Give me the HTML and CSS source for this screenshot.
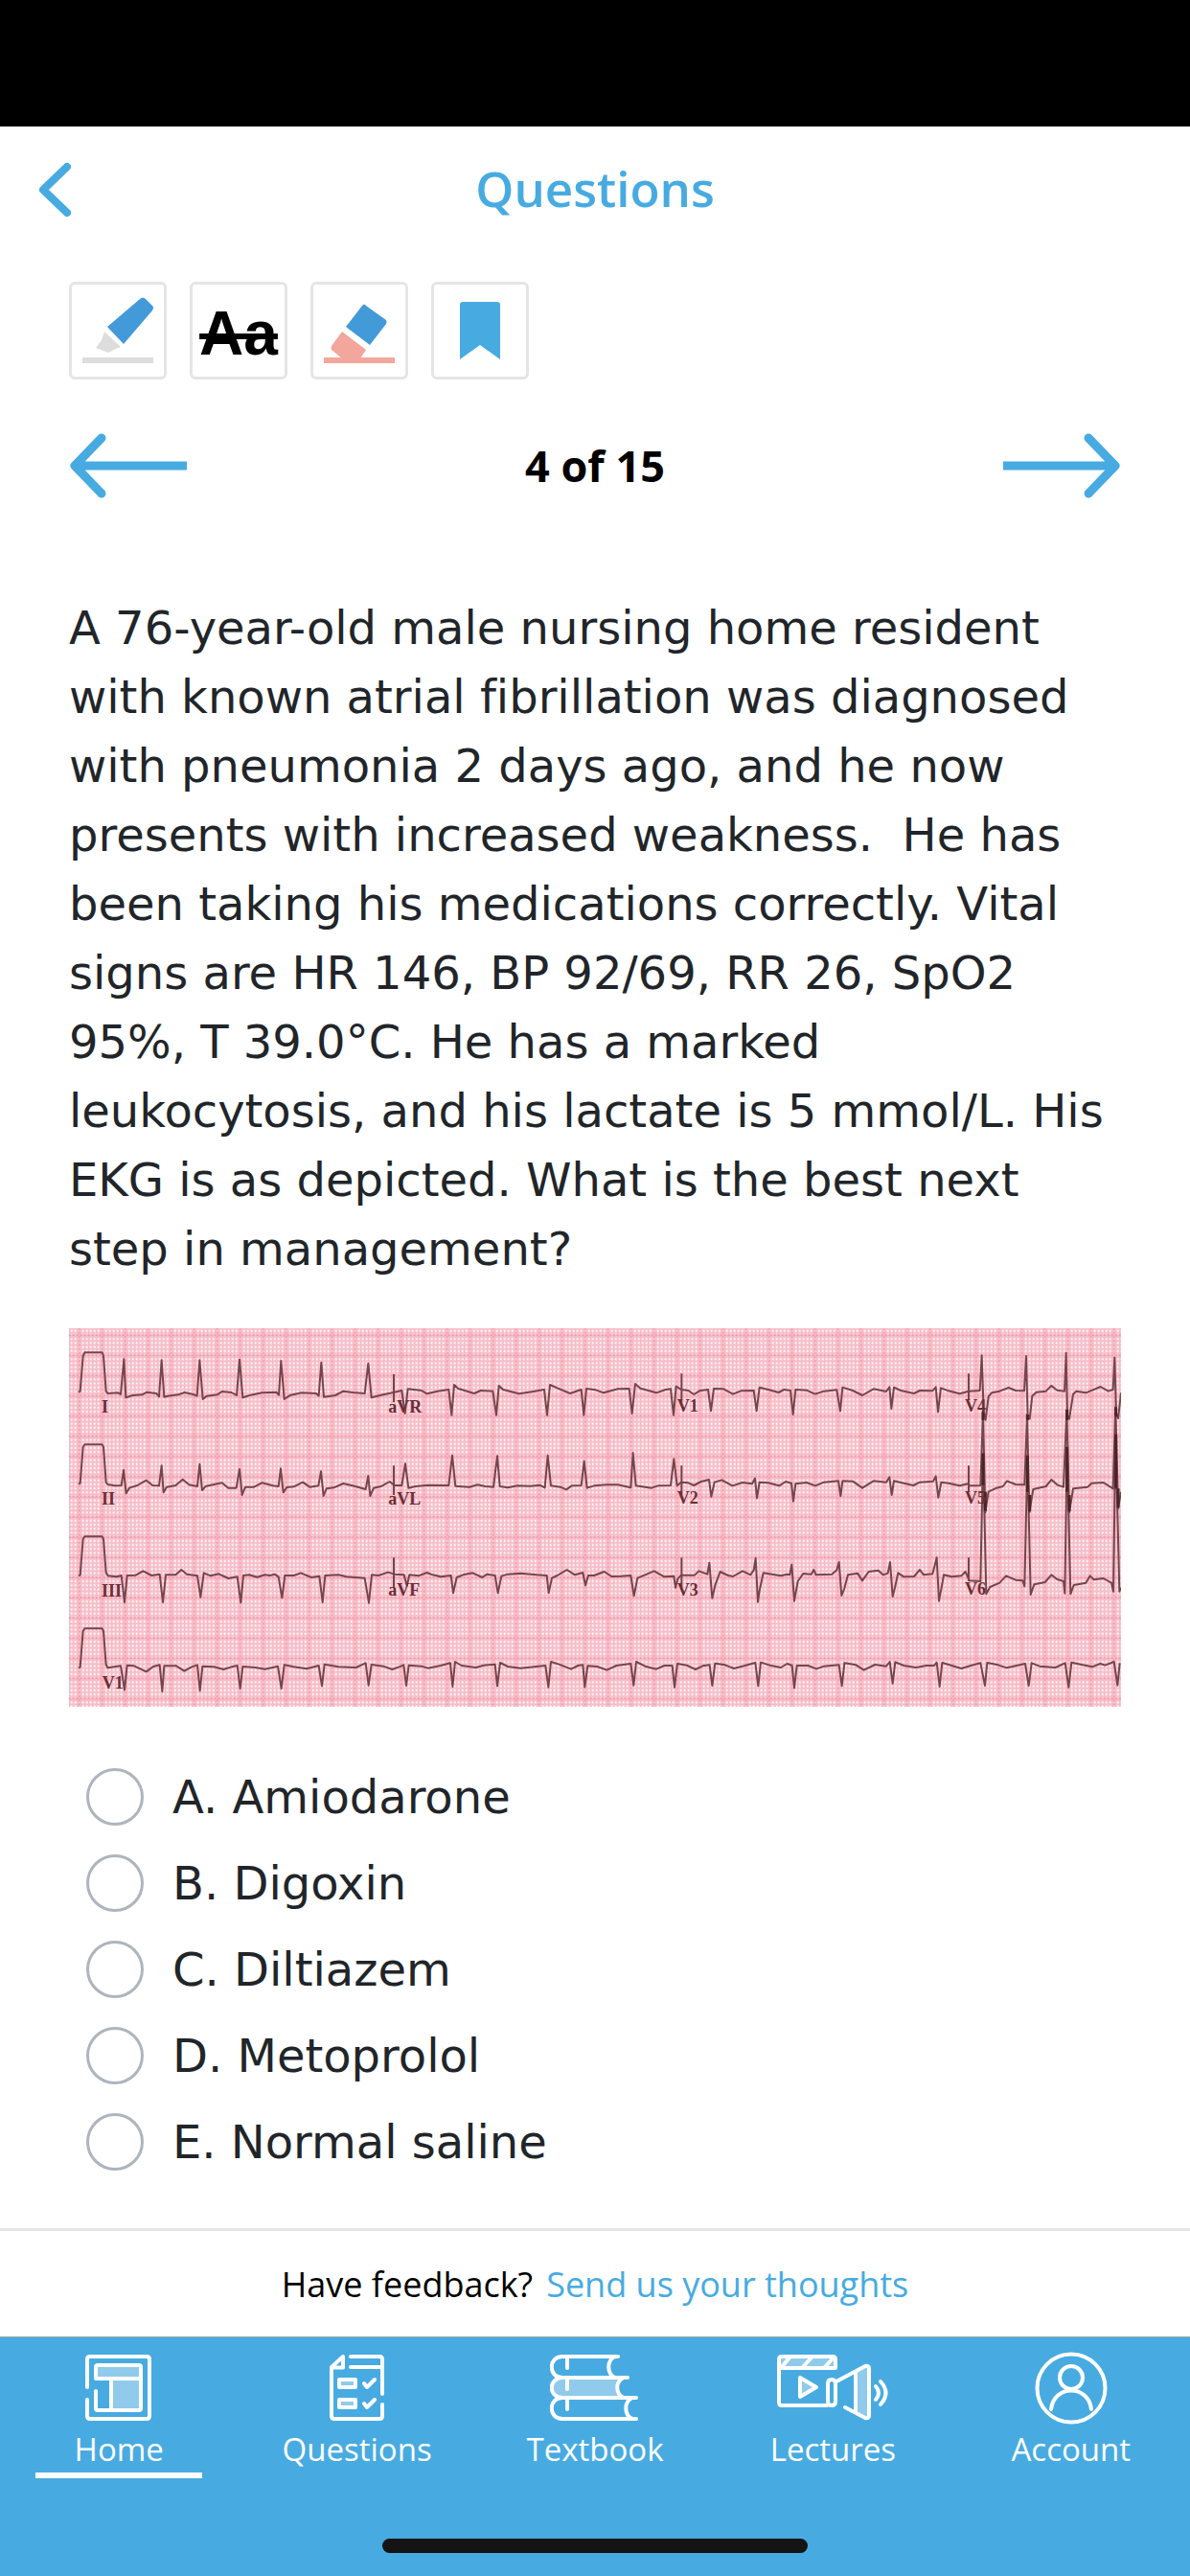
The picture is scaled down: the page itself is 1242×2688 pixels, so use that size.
FILE: index.html
```html
<!DOCTYPE html>
<html lang="en">
  <head>
    <meta charset="UTF-8" />
    <meta name="viewport" content="width=device-width, initial-scale=1.0" />
    <title>Questions</title>
    <link rel="stylesheet" href="styles.css">
  </head>
  <body>
    <div class="status-bar"></div>
    <header class="header">
      <button class="icon-button back" aria-label="Back">
        <svg width="34" height="58" viewBox="0 0 34 58"><path d="M30 5 L5 29 L30 53" /></svg>
      </button>
      <h1>Questions</h1>
    </header>

    <main>
      <div class="tools">
        <button class="tool" aria-label="Highlight">
          <svg width="102" height="102" viewBox="0 0 102 102">
            <path fill="#429ad9" d="M40 47 L74 18 Q77 15 80 18 L87 25 Q89 27 87 30 L57 65 Z" />
            <path fill="#ddd" d="M37 52 L54 68 L49 70 L41 74 L28 69 L34 61 Z" />
            <path fill="#ddd" d="M14 79 H88 V85 H14 Z" />
          </svg>
        </button>
        <button class="tool strike" aria-label="Strikethrough"><s>Aa</s></button>
        <button class="tool" aria-label="Erase">
          <svg width="102" height="102" viewBox="0 0 102 102">
            <path fill="#429ad9" d="M54 25 Q56 22 58 25 L79 40 Q80 42 79 44 L62 66 L37 47 Z" />
            <path fill="#f3a69c" d="M33 52 L58 71 L52 80 H33 L22 71 Q21 69 22 67 Z" />
            <path fill="#f3a69c" d="M14 79 H88 V85 H14 Z" />
          </svg>
        </button>
        <button class="tool" aria-label="Bookmark">
          <svg width="102" height="102" viewBox="0 0 102 102">
            <path fill="#47abe1" d="M30 81 V24 Q30 21 33 21 H69 Q72 21 72 24 V81 L51 66 Z" />
          </svg>
        </button>
      </div>

      <div class="pager">
        <button class="icon-button" aria-label="Previous question">
          <svg width="123" height="68" viewBox="0 0 123 68"><path d="M34 5 L6 34 L34 63 M6 34 H123" /></svg>
        </button>
        <h2>4 of 15</h2>
        <button class="icon-button" aria-label="Next question">
          <svg width="123" height="68" viewBox="0 0 123 68"><path d="M89 5 L117 34 L89 63 M117 34 H0" /></svg>
        </button>
      </div>

      <p class="question">A 76-year-old male nursing home resident<br>
        with known atrial fibrillation was diagnosed<br>
        with pneumonia 2 days ago, and he now<br>
        presents with increased weakness.&nbsp; He has<br>
        been taking his medications correctly. Vital<br>
        signs are HR 146, BP 92/69, RR 26, SpO2<br>
        95%, T 39.0°C. He has a marked<br>
        leukocytosis, and his lactate is 5 mmol/L. His<br>
        EKG is as depicted. What is the best next<br>
        step in management?</p>

      <svg class="ekg" viewBox="36 48 3294 1185" role="img" aria-label="EKG">
        <defs>
          <pattern id="minor" x="44" y="44" width="12" height="12.64" patternUnits="userSpaceOnUse">
            <path d="M6 0 V13 M0 6 H12" stroke="#ee8197" stroke-opacity=".5" stroke-width="6" />
          </pattern>
          <pattern id="major" x="32" y="38" width="72" height="63.2" patternUnits="userSpaceOnUse">
            <path d="M36 0 V64 M0 32 H72" stroke="#ea5f7a" stroke-opacity=".4" stroke-width="5" />
          </pattern>
        </defs>
        <rect x="36" y="48" width="3294" height="1185" fill="#fff6f7" />
        <rect x="36" y="48" width="3294" height="1185" fill="url(#minor)" />
        <rect x="36" y="48" width="3294" height="1185" fill="url(#major)" />
        <g class="trace">
          <polyline points="66,248 71,245 80,135 85,124 140,124 144,135 152,245 157,252 190,250 198,255 208,145 214,265 235,258 265,256 280,248 310,252 318,262 326,148 334,263 345,260 378,256 398,249 425,255 437,260 445,148 455,270 468,260 500,256 515,246 545,249 561,258 570,146 580,265 605,257 640,250 685,248 693,257 700,150 710,270 730,257 765,250 810,252 818,260 826,155 834,263 870,258 895,245 925,249 962,252 973,158 983,265 1020,256 1055,248 1078,243 1088,315 1097,238 1140,243 1157,253 1190,245 1225,240 1234,320 1242,225 1255,237 1305,252 1325,243 1363,245 1374,320 1382,228 1395,240 1445,253 1490,246 1524,240 1533,320 1542,225 1565,235 1605,252 1640,240 1648,320 1656,237 1685,241 1710,250 1755,238 1790,237 1799,315 1809,222 1825,236 1875,250 1905,240 1920,238 1929,320 1937,230 1953,240 1975,243 1993,255 2010,244 2037,240 2046,307 2055,237 2085,238 2115,254 2140,244 2180,243 2189,307 2198,233 2225,240 2258,249 2275,240 2295,243 2303,318 2311,240 2345,242 2372,254 2400,245 2440,241 2451,307 2458,233 2490,243 2520,258 2555,238 2595,246 2605,232 2611,300 2619,233 2640,243 2682,252 2700,243 2740,244 2750,232 2757,310 2766,235 2790,244 2825,253 2850,246 2888,243 2894,133 2900,310 2906,335 2915,262 2925,250 2950,245 2978,234 3000,243 3027,244 3033,135 3038,330 3044,332 3052,260 3065,248 3095,245 3112,228 3130,242 3153,245 3158,125 3162,320 3168,332 3180,255 3190,245 3220,250 3240,242 3266,231 3290,245 3305,240 3310,140 3315,315 3321,330 3330,250" />
          <polyline points="66,536 71,533 80,420 85,412 140,412 144,420 152,530 157,537 180,541 200,540 207,492 215,565 225,548 250,540 278,524 298,540 318,541 326,478 332,562 342,545 370,540 392,521 412,538 438,543 445,473 453,555 465,542 515,532 535,548 560,548 570,489 578,570 588,545 615,545 640,532 675,541 692,543 699,487 707,562 718,546 740,544 768,530 790,545 817,541 825,496 833,573 842,550 865,547 895,534 930,542 965,552 973,510 979,573 990,548 1015,542 1040,528 1055,540 1078,540 1089,472 1099,548 1120,543 1160,539 1225,540 1236,446 1246,542 1290,545 1315,538 1340,543 1365,545 1377,448 1385,543 1410,547 1440,541 1480,542 1510,539 1526,547 1535,446 1545,541 1575,545 1593,553 1610,541 1640,540 1649,464 1658,548 1680,541 1720,538 1755,538 1795,547 1802,438 1811,541 1860,548 1880,541 1920,540 1930,457 1940,541 1953,530 1975,532 1993,540 2015,528 2040,522 2047,575 2057,530 2080,523 2113,541 2145,531 2175,535 2184,518 2190,580 2198,530 2225,532 2260,541 2280,528 2298,533 2304,590 2311,535 2345,531 2373,541 2400,530 2445,526 2452,573 2458,526 2490,527 2520,548 2555,526 2595,530 2605,514 2612,570 2619,526 2650,533 2680,540 2700,530 2742,527 2750,511 2758,578 2767,530 2790,533 2825,541 2850,535 2855,541 2890,540 2898,310 2905,625 2915,560 2940,548 2960,543 2973,526 3000,537 3028,538 3036,318 3043,625 3055,552 3095,543 3112,522 3130,538 3150,545 3160,303 3168,625 3180,550 3225,545 3238,533 3275,531 3305,550 3313,295 3321,612 3330,560" />
          <polyline points="66,823 71,821 80,708 85,700 140,700 144,708 152,813 158,823 185,826 200,822 210,906 218,822 245,821 268,808 295,822 320,818 330,906 339,820 370,820 388,804 405,818 438,823 448,890 458,814 480,823 505,817 535,831 563,826 574,907 582,822 600,820 625,827 650,820 665,822 680,818 692,826 703,892 712,822 740,822 762,814 795,828 820,824 830,906 838,822 880,820 905,826 962,830 975,908 984,820 1005,822 1035,812 1055,818 1085,820 1094,855 1102,820 1130,823 1157,813 1175,820 1200,826 1232,822 1239,877 1250,828 1270,820 1300,814 1330,828 1345,818 1370,822 1379,877 1390,824 1410,818 1450,815 1500,820 1532,822 1538,877 1548,830 1565,822 1595,804 1620,820 1645,813 1653,853 1662,822 1680,822 1712,810 1735,825 1765,824 1795,822 1805,886 1816,830 1840,820 1868,808 1900,826 1930,824 1935,860 1942,832 1953,821 1995,821 2008,808 2035,818 2041,782 2050,893 2060,850 2075,810 2100,822 2115,825 2145,808 2170,820 2180,805 2186,768 2193,905 2198,870 2210,814 2265,823 2285,818 2293,820 2299,788 2307,902 2318,840 2335,816 2360,818 2368,804 2375,820 2425,818 2440,805 2447,780 2455,885 2464,862 2475,820 2505,815 2520,838 2540,810 2570,806 2585,820 2600,815 2607,780 2615,888 2622,860 2632,814 2650,826 2682,825 2700,804 2712,820 2740,817 2753,766 2760,902 2768,860 2775,820 2800,826 2830,823 2843,810 2855,838 2890,840 2898,440 2908,880 2920,858 2950,845 2970,823 3000,836 3022,838 3028,856 3037,445 3047,882 3058,850 3092,843 3112,820 3130,834 3150,840 3154,878 3161,420 3172,880 3182,852 3220,845 3233,823 3245,835 3275,831 3300,845 3306,872 3313,380 3325,872 3330,860" />
          <polyline points="66,1111 71,1109 80,996 85,988 140,988 144,996 152,1101 157,1111 198,1105 210,1180 218,1103 240,1105 278,1123 300,1107 320,1102 328,1185 334,1105 372,1105 397,1121 420,1108 438,1102 446,1183 454,1106 490,1108 520,1116 545,1108 563,1104 572,1176 580,1107 620,1110 650,1115 690,1106 701,1176 710,1102 740,1108 780,1114 818,1104 828,1168 836,1100 880,1108 935,1110 965,1096 974,1166 983,1101 1020,1106 1048,1116 1070,1108 1084,1102 1092,1167 1100,1103 1140,1106 1160,1112 1200,1104 1230,1096 1237,1170 1245,1092 1265,1104 1310,1110 1335,1103 1370,1100 1377,1168 1386,1095 1410,1107 1450,1112 1528,1104 1537,1172 1545,1092 1570,1100 1608,1115 1630,1104 1645,1102 1651,1171 1660,1105 1690,1107 1720,1118 1750,1104 1795,1098 1804,1166 1812,1092 1840,1106 1875,1115 1900,1104 1925,1104 1932,1172 1941,1098 1970,1103 1998,1116 2020,1105 2042,1102 2050,1167 2059,1097 2090,1102 2118,1113 2150,1105 2185,1095 2194,1168 2202,1094 2230,1103 2265,1110 2285,1098 2300,1104 2307,1174 2315,1104 2350,1104 2376,1114 2400,1106 2447,1102 2456,1168 2464,1096 2500,1102 2525,1118 2560,1101 2595,1106 2606,1092 2615,1160 2623,1093 2650,1104 2688,1110 2720,1104 2745,1104 2753,1094 2762,1170 2770,1095 2800,1104 2830,1113 2860,1104 2890,1096 2904,1167 2911,1095 2945,1102 2972,1111 3000,1105 3030,1098 3041,1167 3050,1096 3075,1106 3125,1110 3155,1096 3166,1172 3175,1094 3210,1102 3240,1108 3265,1098 3280,1103 3308,1092 3319,1166 3326,1096" />
          <path d="M1053 192 V280 M1053 478 V570 M1053 766 V860 M1954 190 V280 M1954 478 V570 M1954 766 V860 M2853 190 V270 M2853 478 V560 M2853 766 V840" />
          <!-- V4-V6 overlap -->
          <path class="dense" d="M2898 310 V335 M2898 440 V540 M2905 560 V620 M3037 318 V335 M3037 446 V560 M3044 570 V622 M3161 303 V335 M3161 420 V560 M3168 570 V622 M3314 295 V325 M3314 380 V550 M3321 550 V610" />
        </g>
        <g class="leads">
          <text x="138" y="311">I</text>
          <text x="138" y="599">II</text>
          <text x="138" y="887">III</text>
          <text x="140" y="1175">V1</text>
          <text x="1036" y="311">aVR</text>
          <text x="1036" y="599">aVL</text>
          <text x="1036" y="886">aVF</text>
          <text x="1940" y="310">V1</text>
          <text x="1940" y="598">V2</text>
          <text x="1940" y="884">V3</text>
          <text x="2841" y="308">V4</text>
          <text x="2841" y="596">V5</text>
          <text x="2841" y="882">V6</text>
        </g>
      </svg>

      <form class="options">
        <label><input type="radio" name="answer" value="A"> A. Amiodarone</label>
        <label><input type="radio" name="answer" value="B"> B. Digoxin</label>
        <label><input type="radio" name="answer" value="C"> C. Diltiazem</label>
        <label><input type="radio" name="answer" value="D"> D. Metoprolol</label>
        <label><input type="radio" name="answer" value="E"> E. Normal saline</label>
      </form>
    </main>

    <div class="feedback">
      <span>Have feedback?</span>
      <a href="#">Send us your thoughts</a>
    </div>

    <nav class="tab-bar">
      <div class="tabs">
        <a class="tab active" href="#">
          <svg width="70" height="76" viewBox="0 -3 70 76">
            <path class="tint" d="M11 11 H58 V25 H11 Z M27 25 H58 V58 H27 Z" />
            <path d="M2 34 V5 Q2 2 5 2 H64 Q67 2 67 5 V64 Q67 67 64 67 H5 Q2 67 2 64 V47" />
            <path d="M11 25 V13 Q11 11 13 11 H56 Q58 11 58 13 V56 Q58 58 56 58 H13 Q11 58 11 56 V38 M11 25 H58 M27 25 V58" />
          </svg>
          <span>Home</span>
        </a>
        <a class="tab" href="#">
          <svg width="57" height="76" viewBox="0 -3 57 76">
            <path d="M2 13 L14 2 V13.500 H2 V64 Q2 67 5 67 H52 Q55 67 55 64 V52 M22 2 H52 Q55 2 55 5 V41 M22 13 H55" />
            <path class="tint" d="M10 26 H27 V34 H10 Z M10 47 H27 V55 H10 Z" />
            <path d="M10 26 H27 V34 H10 Z M10 47 H27 V55 H10 Z M36 30 L39 34 L47 26 M36 51 L39 55 L47 47" />
          </svg>
          <span>Questions</span>
        </a>
        <a class="tab" href="#">
          <svg width="93" height="76" viewBox="0 -3 93 76">
            <path class="tint" d="M80 24 H13 C-1 24 -1 45 13 45 H77 C68 41 68 28 77 24 Z" />
            <path d="M71 2 H13 C-2 2 -2 24 13 24 H81 M68 2 C59 6 59 20 68 24 M13 24 C-2 24 -2 45 13 45 H90 M77 24 C68 28 68 41 77 45 M13 45 C-2 45 -2 67 13 67 H90 M86 45 C77 49 77 63 86 67" />
            <path d="M18 3 V14 M18 25 V36 M18 46 V57" />
          </svg>
          <span>Textbook</span>
        </a>
        <a class="tab" href="#">
          <svg width="117" height="76" viewBox="0 -3 117 76">
            <path class="tint" d="M2 2 H61 V14 H2 Z M24 24 L41 34 L24 44 Z M82 19 L94 12 V67 L82 60 Z" />
            <path class="thin" d="M52 53 H5 Q2 53 2 50 V5 Q2 2 5 2 H58 Q61 2 61 5 V14 H2 M4 14 L13 3 M26 14 L36 3 M49 14 L59 3" />
            <path class="thin" d="M24 24 L41 34 L24 44 Z M53 30 Q53 26 57 26 Q61 26 61 30 V49 Q61 53 57 53 Q53 53 53 49 Z M62 28 L92 12 Q96 11 96 14 V64 Q96 67 92 66 L71 55 M82 18 V60" />
            <path class="thin" d="M103 33 Q109 40 103 47 M108 28 Q119 40 108 52" />
          </svg>
          <span>Lectures</span>
        </a>
        <a class="tab" href="#">
          <svg width="76" height="76" viewBox="0 0 76 76">
            <circle cx="38" cy="38" r="35.500" />
            <circle cx="38" cy="27" r="12" />
            <path d="M17 60 C20 34 56 34 59 60" />
          </svg>
          <span>Account</span>
        </a>
      </div>
      <div class="home-indicator"></div>
    </nav>
  </body>
</html>
```
FILE: styles.css
```css
* {
  box-sizing: border-box;
}
body {
  margin: 0;
  min-height: 100vh;
  display: flex;
  flex-direction: column;
  font-family: "Open Sans", sans-serif;
  background-color: #fff;
  color: #000;
}
button {
  padding: 0;
  border: none;
  background: none;
  cursor: pointer;
}
svg {
  display: block;
}
a {
  color: #47abe1;
  text-decoration: none;
}
.status-bar {
  height: 132px;
  background-color: #000;
}
.header {
  display: grid;
  grid-template-columns: 72px 1fr 72px;
  align-items: center;
  height: 132px;
  padding: 0 40px;
}
.header h1 {
  margin: 0;
  padding-bottom: 4px;
  font-size: 51px;
  line-height: 68px;
  font-weight: 600;
  text-align: center;
  color: #47abe1;
}
.icon-button path {
  fill: none;
  stroke: #47abe1;
  stroke-width: 9;
  stroke-linecap: round;
  stroke-linejoin: round;
}
.back path {
  stroke-width: 8;
}
main {
  flex: 1;
  padding: 30px 72px 0;
}
.tools {
  display: flex;
  gap: 24px;
}
.tool {
  width: 102px;
  height: 102px;
  border: 3px solid #e5e5e5;
  border-radius: 6px;
  display: flex;
  align-items: center;
  justify-content: center;
}
.tool svg {
  flex: none;
}
.strike {
  padding-top: 6px;
  font-family: "Liberation Sans", sans-serif;
  font-size: 64px;
  font-weight: bold;
  color: #000;
}
.strike s {
  text-decoration-thickness: 6px;
}
.pager {
  display: flex;
  align-items: center;
  justify-content: space-between;
  height: 180px;
}
.pager h2 {
  margin: 0;
  font-size: 45px;
  line-height: 60px;
}
.question {
  margin: 43px 0 47px;
  font-family: Verdana, "DejaVu Sans", sans-serif;
  font-size: 48px;
  line-height: 72px;
  font-variant-ligatures: none;
  color: #212529;
  white-space: nowrap;
}
.ekg {
  width: 100%;
  height: auto;
}
.trace polyline,
.trace path {
  fill: none;
  stroke: #75454b;
  stroke-width: 6;
  stroke-linejoin: round;
}
.trace .dense {
  stroke: #4a2428;
  stroke-width: 9;
}
.leads text {
  font-family: "Liberation Serif", serif;
  font-size: 54px;
  font-weight: bold;
  fill: #6b2d35;
}
.options {
  margin-top: 49px;
  padding-left: 18px;
}
.options label {
  display: flex;
  align-items: center;
  gap: 30px;
  height: 90px;
  font-family: Verdana, "DejaVu Sans", sans-serif;
  font-size: 48px;
  color: #212529;
}
.options input {
  appearance: none;
  width: 60px;
  height: 60px;
  margin: 0;
  border: 3px solid #adb5bd;
  border-radius: 50%;
}
.options input:checked {
  border: 18px solid #47abe1;
}
.feedback {
  display: flex;
  align-items: center;
  justify-content: center;
  gap: 14px;
  height: 113px;
  border-top: 3px solid #e5e5e5;
  font-size: 36px;
}
.tab-bar {
  height: 250px;
  padding-bottom: 24px;
  display: flex;
  flex-direction: column;
  align-items: center;
  justify-content: space-between;
  border-top: 1px solid #a5a5a5;
  background-color: #47abe1;
}
.tabs {
  width: 100%;
  display: grid;
  grid-template-columns: repeat(5, 1fr);
}
.tab {
  display: flex;
  flex-direction: column;
  align-items: center;
  height: 147px;
  margin: 0 37px;
  padding-top: 15px;
  color: #fff;
  font-size: 33px;
  line-height: 45px;
}
.tab span {
  margin-top: 3px;
}
.active {
  background: linear-gradient(#fff, #fff) bottom / 100% 6px no-repeat;
}
.tab svg {
  fill: none;
  stroke: #fff;
  stroke-width: 4;
  stroke-linecap: round;
  stroke-linejoin: round;
}
.tab .tint {
  fill: #90cbec;
  stroke: none;
}
.tab .thin {
  stroke-width: 4;
}
.home-indicator {
  width: 444px;
  height: 15px;
  border-radius: 8px;
  background-color: #141414;
}
```
